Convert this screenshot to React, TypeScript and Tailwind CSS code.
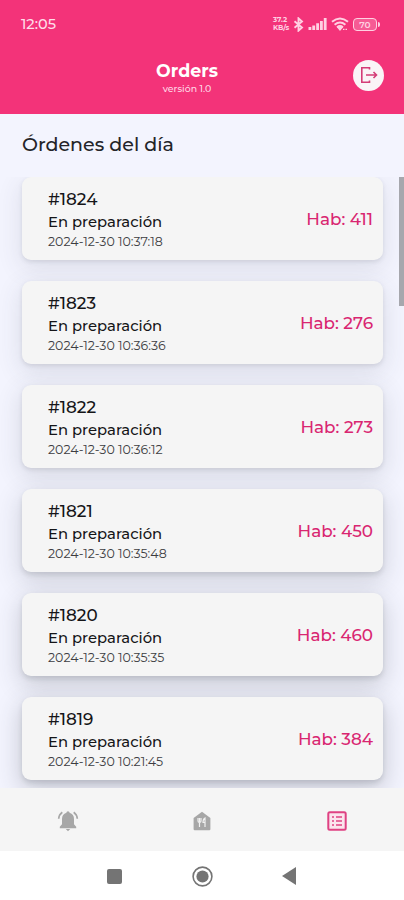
import React from "react";

type Order = {
  id: string;
  date: string;
  room: string;
  shadow: string;
};

const orders: Order[] = [
  { id: "#1824", date: "2024-12-30 10:37:18", room: "411", shadow: "shadow-[0_2px_4px_rgba(60,65,80,0.12),0_7px_24px_2px_rgba(60,65,80,0.11)]" },
  { id: "#1823", date: "2024-12-30 10:36:36", room: "276", shadow: "shadow-[0_2px_4px_rgba(60,65,80,0.13),0_7px_24px_2px_rgba(60,65,80,0.12)]" },
  { id: "#1822", date: "2024-12-30 10:36:12", room: "273", shadow: "shadow-[0_2px_4px_rgba(60,65,80,0.13),0_7px_24px_2px_rgba(60,65,80,0.14)]" },
  { id: "#1821", date: "2024-12-30 10:35:48", room: "450", shadow: "shadow-[0_3px_5px_rgba(50,55,65,0.14),0_8px_24px_2px_rgba(50,55,65,0.17)]" },
  { id: "#1820", date: "2024-12-30 10:35:35", room: "460", shadow: "shadow-[0_3px_5px_rgba(50,55,65,0.14),0_8px_24px_2px_rgba(50,55,65,0.20)]" },
  { id: "#1819", date: "2024-12-30 10:21:45", room: "384", shadow: "shadow-[0_3px_5px_rgba(50,55,65,0.15),0_8px_24px_2px_rgba(50,55,65,0.22)]" },
];

function StatusIcons() {
  return (
    <div className="flex h-[16px] items-center text-[#ffd0e2]">
      <div className="flex w-[17px] flex-col text-[7px] leading-[8px] font-bold">
        <span>37.2</span>
        <span className="tracking-[-0.1px]">KB/s</span>
      </div>
      <svg className="ml-[3px] h-[15px] w-[11px]" viewBox="0 0 11 15" fill="none" stroke="currentColor" strokeWidth="1.9">
        <path d="M1.5 4.2 9 10.5 5.5 13.6V1.4L9 4.5 1.5 10.8" />
      </svg>
      <svg className="ml-[4px] h-[12px] w-[19px]" viewBox="0 0 19 12" fill="currentColor">
        <path d="M.5 9h2.8v3H.5zM4.3 7.5h2.8V12H4.3zM8.2 5.2H11V12H8.2zM12 3h2.8v9H12zM15.8 0h2.8v12h-2.8z" />
      </svg>
      <svg className="ml-[4px] h-[14px] w-[18px]" viewBox="0 0 18 14" fill="none" stroke="currentColor" strokeWidth="2">
        <path d="M1 4.8Q9-1.8 17 4.8M3.6 7.7Q9 3.4 14.4 7.7M6 10.2Q9 8 12 10.2" />
        <path d="M7 10.5h4L9 13zM12 12.4h1.5M14.5 12.4H16" fill="currentColor" strokeWidth="1.2" />
      </svg>
      <div className="ml-[4px] flex h-[13px] w-[24px] items-center justify-center rounded-[4px] border-[1.5px] border-[#ffd0e2] bg-[#f65b94] text-[9px] leading-none font-semibold">
        70
      </div>
      <div className="ml-px h-[5px] w-[2px] rounded-r-full bg-[#ffd0e2]" />
    </div>
  );
}

function OrderCard({ order }: { order: Order }) {
  return (
    <article className={`flex h-[83px] shrink-0 justify-between rounded-[9px] bg-[#f5f5f5] pr-[10px] pl-[26px] ${order.shadow}`}>
      <div className="flex flex-col items-start pt-[10px] whitespace-nowrap text-[#151518]">
        <span className="text-[16.8px] leading-[24px] font-medium">{order.id}</span>
        <span className="text-[14.8px] leading-[22px] font-medium">En preparación</span>
        <span className="text-[12.55px] leading-[18px] text-[#3d3d42]">{order.date}</span>
      </div>
      <span className="pt-[30px] text-[16.8px] leading-6 font-medium whitespace-nowrap text-[#d92671]">Hab: {order.room}</span>
    </article>
  );
}

export default function App() {
  return (
    <div className="flex h-[900px] w-[404px] flex-col overflow-hidden bg-[#f3f4fe] font-['Montserrat','Inter',sans-serif]">
      <header className="flex h-[114px] shrink-0 flex-col bg-[#f33379] text-white">
        <div className="flex h-[48px] items-center justify-between pr-[24px] pl-[21px]">
          <span className="pt-[2px] text-[14.5px] font-medium text-[#ffdce8]">12:05</span>
          <StatusIcons />
        </div>
        <div className="flex h-[54px] items-center pr-[20px] pl-[130px]">
          <div className="flex w-[114px] flex-col items-center pt-[5px]">
            <h1 className="text-[17.4px] leading-[22px] font-bold">Orders</h1>
            <span className="text-[9.4px] leading-[14px] font-medium text-[#ffd8e6]">versión 1.0</span>
          </div>
          <button aria-label="Salir" className="ml-auto flex size-[31px] items-center justify-center rounded-full bg-[#faf4f7] text-[#d43c77]">
            <svg className="size-[18px]" viewBox="0 0 18 18" fill="none" stroke="currentColor" strokeWidth="1.6">
              <path d="M9.5 3.5V1.8H1.8v14.4h7.7v-1.7M6 9h10.5M13.5 6 16.5 9l-3 3" />
            </svg>
          </button>
        </div>
      </header>
      <h2 className="h-[63px] shrink-0 pt-[17px] pl-[22px] text-[19px] leading-7 font-medium text-[#242429]">Órdenes del día</h2>
      <main className="flex h-[611px] shrink-0 justify-between overflow-hidden pl-[22px]">
        <div className="flex w-[361px] flex-col gap-[21px]">
          {orders.map((order) => <OrderCard key={order.id} order={order} />)}
        </div>
        <div className="h-[129px] w-[5px] bg-[#a6a7ad]" />
      </main>
      <nav className="grid h-[63px] shrink-0 grid-cols-3 place-items-center bg-[#f5f5f5] pt-[2px] pl-px text-[#a7a7a7]">
        <svg className="h-[22px] w-[22px]" viewBox="0 0 22 22" fill="currentColor">
          <path d="M11 1.2q1.5 0 1.6 1.6Q17 4.2 17 9v5.2l2.2 2.6v1.4H2.8v-1.4L5 14.2V9q0-4.8 4.4-6.2Q9.5 1.2 11 1.2zM8.8 19h4.4L11 21.3z" />
          <path d="M5.3 2.2Q2 4.5 1.7 8.8M16.7 2.2q3.3 2.3 3.6 6.6" fill="none" stroke="currentColor" strokeWidth="1.7" />
        </svg>
        <svg className="size-[20px]" viewBox="0 0 20 20">
          <path d="M10 .8 18.4 7v11.2q0 1-1 1H2.6q-1 0-1-1V7z" fill="currentColor" />
          <path d="M6 7v3q0 1.5 1.5 1.5V16M7.5 7v4M9 7v3q0 1.5-1.5 1.5M13 16V7q-2 1-2 4.5h2" fill="none" stroke="#f1f1f1" strokeWidth="1.2" />
        </svg>
        <svg className="size-[20px] text-[#df4283]" viewBox="0 0 20 20" fill="none" stroke="currentColor" strokeWidth="2">
          <rect x="1.3" y="1.3" width="17.4" height="17.4" rx="1.5" fill="#fbe4ed" />
          <path d="M5 6h2M9 6h6M5 10h2M9 10h6M5 14h2M9 14h6" strokeWidth="1.7" />
        </svg>
      </nav>
      <footer className="flex h-[49px] shrink-0 items-center bg-white pt-px pl-[107px] text-[#747474]">
        <div className="size-[15px] rounded-[2px] bg-current" />
        <svg className="ml-[70px] size-[21px]" viewBox="0 0 21 21">
          <circle cx="10.5" cy="10.5" r="9.4" fill="none" stroke="currentColor" strokeWidth="1.6" />
          <circle cx="10.5" cy="10.5" r="6.1" fill="currentColor" />
        </svg>
        <svg className="ml-[69px] h-[18px] w-[14px]" viewBox="0 0 14 18"><path d="M14 0v18L0 9z" fill="currentColor" /></svg>
      </footer>
    </div>
  );
}
